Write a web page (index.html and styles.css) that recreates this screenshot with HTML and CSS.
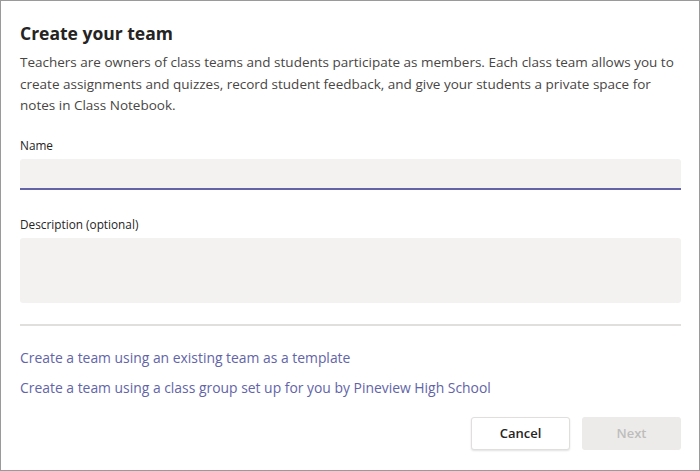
FILE: index.html
```html
<!DOCTYPE html>
<html>
<head>
<meta charset="utf-8">
<link rel="stylesheet" href="styles.css">
</head>
<body>
<div class="dialog">
  <h1 class="title">Create your team</h1>
  <p class="intro">Teachers are owners of class teams and students participate as members. Each class team allows you to create assignments and quizzes, record student feedback, and give your students a private space for notes in Class Notebook.</p>
  <label class="label">Name</label>
  <div class="input"></div>
  <label class="label label-desc">Description (optional)</label>
  <div class="textarea"></div>
  <div class="divider"></div>
  <a class="link link-first">Create a team using an existing team as a template</a>
  <a class="link">Create a team using a class group set up for you by Pineview High School</a>
  <div class="actions">
    <button class="btn btn-cancel">Cancel</button>
    <button class="btn btn-next">Next</button>
  </div>
</div>
</body>
</html>
```
FILE: styles.css
```css
html, body {
  margin: 0;
  padding: 0;
  background: #ffffff;
}
.dialog {
  box-sizing: border-box;
  width: 700px;
  height: 471px;
  border: 1px solid #9a9a9a;
  padding: 0 18px 0 19px;
  display: flex;
  flex-direction: column;
  font-family: "Open Sans", "Noto Sans", sans-serif;
}
.title {
  margin: 19px 0 0 0;
  font-size: 17.5px;
  line-height: 26px;
  font-weight: 700;
  color: #252423;
}
.intro {
  margin: 6px 0 0 0;
  font-size: 13.5px;
  line-height: 21.5px;
  color: #484644;
}
.label {
  display: block;
  margin-top: 19px;
  font-size: 11.8px;
  line-height: 18px;
  color: #252423;
}
.label-desc {
  margin-top: 25px;
}
.input {
  margin-top: 5px;
  height: 29px;
  background: #f3f2f1;
  border-radius: 3px 3px 0 0;
  border-bottom: 2px solid #6264a7;
}
.textarea {
  margin-top: 5px;
  height: 65px;
  background: #f3f2f1;
  border-radius: 3px;
}
.divider {
  margin-top: 21px;
  height: 2px;
  background: #e1dfdd;
}
.link {
  display: block;
  font-size: 13.9px;
  line-height: 20px;
  color: #6264a7;
  margin-top: 10px;
}
.link-first {
  margin-top: 22px;
}
.actions {
  display: flex;
  justify-content: flex-end;
  gap: 12px;
  margin-top: 19px;
}
.btn {
  box-sizing: border-box;
  width: 99px;
  height: 33px;
  border-radius: 3px;
  font-family: "Open Sans", "Noto Sans", sans-serif;
  font-size: 13px;
  font-weight: 600;
  padding: 0;
}
.btn-cancel {
  background: #ffffff;
  border: 1px solid #e1dfdd;
  color: #252423;
  box-shadow: 0 1px 2px rgba(0,0,0,0.12);
}
.btn-next {
  background: #edebe9;
  border: none;
  color: #bdbdbd;
}
```
